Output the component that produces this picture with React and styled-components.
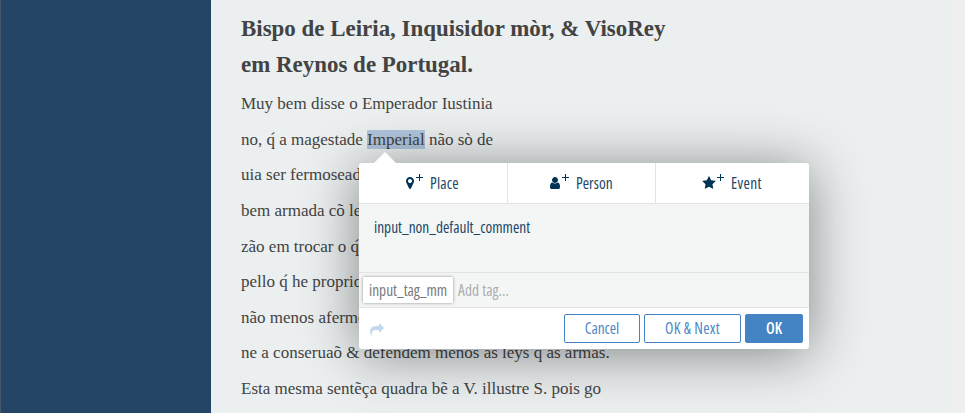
import React from 'react';
import styled, { createGlobalStyle } from 'styled-components';

const GlobalStyle = createGlobalStyle`
  *, *::before, *::after { box-sizing: border-box; }
  body { margin: 0; background: #efefef; overflow: hidden; }
`;

const Page = styled.div`
  display: flex;
  width: 965px;
  height: 413px;
  overflow: hidden;
  background: #efefef;
`;

const Sidebar = styled.aside`
  flex: none;
  width: 211px;
  background: #254567;
  border-left: 1px solid #46586a;
`;

const Document = styled.main`
  position: relative;
  flex: none;
  width: 742px;
  padding: 11px 0 0 30px;
  background: #ebeff0;
  color: #434343;
  font: 17px/35.65px "Liberation Serif", serif;
`;

const Heading = styled.h2`
  margin: 0 0 3.6px;
  font-size: 22.95px;
  line-height: 35.7px;
  font-weight: bold;
`;

const Line = styled.div`
  height: 35.65px;
  white-space: pre;
`;

const Selection = styled.span`
  background: #afc6de;
`;

const Popup = styled.section`
  position: absolute;
  left: 148px;
  top: 163px;
  width: 450px;
  height: 186px;
  display: flex;
  flex-direction: column;
  border-radius: 3px;
  background: #fff;
  box-shadow: 0 5px 55px rgba(0, 0, 0, 0.45);
  color: #003456;
  font: 15.4px/20px "Open Sans", sans-serif;
  font-stretch: 75%;

  &::before {
    content: '';
    position: absolute;
    left: 15px;
    top: -11px;
    border: solid transparent;
    border-width: 0 11px 11px;
    border-bottom-color: #fff;
  }
`;

const Categories = styled.div`
  display: grid;
  grid-template-columns: 149px 148px 153px;
  height: 41px;
  border-bottom: 1px solid #e2e4e4;
`;

const Category = styled.button`
  display: flex;
  align-items: center;
  min-width: 0;
  padding: 0 0 0 ${p => p.$inset}px;
  border: 0;
  border-right: 1px solid #e2e4e4;
  background: transparent;
  color: inherit;
  font: inherit;
  font-stretch: 75%;
  letter-spacing: ${p => p.$spacing || 0}px;

  &:last-child { border-right: 0; }
`;

const Label = styled.span`
  padding-top: 1px;
  color: #1a4866;
`;

const Icon = styled.svg`
  flex: none;
  display: block;
  width: ${p => p.$w}px;
  height: ${p => p.$h || 14}px;
  fill: currentColor;
`;

const Plus = styled(Icon)`
  margin: 0 ${p => p.$gap}px 11px ${p => p.$before}px;
`;

const Comment = styled.div`
  height: 69px;
  padding: 14px 15px;
  background: #f4f6f6;
  border-bottom: 1px solid #e2e4e4;
  color: #1a4866;
`;

const Tags = styled.div`
  display: flex;
  align-items: center;
  height: 35px;
  padding-left: 4px;
  background: #f4f6f6;
  border-bottom: 1px solid #e2e4e4;
`;

const Tag = styled.span`
  width: 90px;
  height: 26px;
  padding-left: 6px;
  line-height: 27px;
  background: #fff;
  box-shadow: 0 0 3px rgba(0, 0, 0, 0.4);
  color: #7a7a7a;
`;

const Placeholder = styled.span`
  margin-left: 5px;
  padding-top: 1px;
  letter-spacing: 0.1px;
  color: #adadad;
`;

const Footer = styled.footer`
  display: flex;
  align-items: center;
  gap: 4px;
  flex: 1;
  padding: 0 6px 0 11px;
  color: #c5d9ee;
`;

const Share = styled(Icon)`
  margin-top: 2px;
`;

const Spacer = styled.div`
  flex: 1;
`;

const Button = styled.button`
  width: ${p => p.$w}px;
  height: 29px;
  padding: 0;
  border: 1px solid #4483c4;
  border-radius: 2px;
  background: ${p => (p.$primary ? '#4483c4' : '#fff')};
  color: ${p => (p.$primary ? '#fff' : '#4c89c7')};
  font: inherit;
  font-stretch: 75%;
  font-weight: ${p => (p.$primary ? 600 : 400)};
  letter-spacing: ${p => p.$spacing || 0}px;
  line-height: 26px;
`;

const MARKER = 'M768 640q0-106-75-181t-181-75-181 75-75 181 75 181 181 75 181-75 75-181zm256 0q0 109-33 179l-364 774q-16 33-47.5 52t-67.5 19-67.5-19-46.5-52l-365-774q-33-70-33-179 0-212 150-362t362-150 362 150 150 362z';
const USER = 'M1536 1399q0 109-62.5 187t-150.5 78h-854q-88 0-150.5-78t-62.5-187q0-85 8.5-160.5t31.5-152 58.5-131 94-89 134.5-34.5q131 128 313 128t313-128q76 0 134.5 34.5t94 89 58.5 131 31.5 152 8.5 160.5zm-256-887q0 159-112.5 271.5t-271.5 112.5-271.5-112.5-112.5-271.5 112.5-271.5 271.5-112.5 271.5 112.5 112.5 271.5z';
const STAR = 'M1728 647q0 22-26 48l-363 354 86 500q1 7 1 20 0 21-10.5 35.5t-30.5 14.5q-19 0-40-12l-449-236-449 236q-22 12-40 12-21 0-31.5-14.5t-10.5-35.5q0-6 2-20l86-500-364-354q-25-27-25-48 0-37 56-46l502-73 225-455q19-41 49-41t49 41l225 455 502 73q56 9 56 46z';
const SHARE = 'M1792 640q0 26-19 45l-512 512q-19 19-45 19t-45-19-19-45v-256h-224q-98 0-175.5 6t-154 21.5-133 42.5-105.5 69.5-80 101-48.5 138.5-17.5 181q0 55 5 123 0 6 2.5 23.5t2.5 26.5q0 15-8.5 25t-23.5 10q-16 0-28-17-7-9-13-22t-13.5-30-10.5-24q-127-285-127-451 0-199 53-333 162-403 875-403h224v-256q0-26 19-45t45-19 45 19l512 512q19 19 19 45z';

const categories = [
  { label: 'Place', path: MARKER, box: '0 0 1024 1792', width: 8, inset: 47, before: 2, gap: 7, spacing: 0.2 },
  { label: 'Person', path: USER, box: '256 0 1280 1792', width: 10, inset: 42, before: 2, gap: 7, spacing: 0 },
  { label: 'Event', path: STAR, box: '0 0 1792 1792', width: 14, inset: 46, before: 1, gap: 7, spacing: 0.4 },
];

const verses = [
  'uia ser fermosead',
  'bem armada cõ le',
  'zão em trocar o q\u0301',
  'pello q\u0301 he proprio',
  'não menos afermo',
  'ne a conseruaõ & defendem menos as leys q\u0301 as armas.',
  'Esta mesma sentẽça quadra bẽ a V. illustre S. pois go',
];

export default function App() {
  return (
    <>
      <GlobalStyle />
      <Page>
        <Sidebar />
        <Document>
          <Heading>
            Bispo de Leiria, Inquisidor mòr, &amp; VisoRey
            <br />
            em Reynos de Portugal.
          </Heading>
          <Line>Muy bem disse o Emperador Iustinia</Line>
          <Line>
            {'no, q\u0301 a magestade '}
            <Selection>Imperial</Selection>
            {' não sò de'}
          </Line>
          {verses.map(text => (
            <Line key={text}>{text}</Line>
          ))}
          <Popup>
            <Categories>
              {categories.map(c => (
                <Category key={c.label} $inset={c.inset} $spacing={c.spacing}>
                  <Icon viewBox={c.box} $w={c.width}><path d={c.path} /></Icon>
                  <Plus viewBox="0 0 7 7" $w={7} $h={7} $before={c.before} $gap={c.gap}>
                    <path d="M3 0h1v3h3v1H4v3H3V4H0V3h3z" />
                  </Plus>
                  <Label>{c.label}</Label>
                </Category>
              ))}
            </Categories>
            <Comment>input_non_default_comment</Comment>
            <Tags>
              <Tag>input_tag_mm</Tag>
              <Placeholder>Add tag...</Placeholder>
            </Tags>
            <Footer>
              <Share viewBox="0 0 1792 1792" $w={14}><path d={SHARE} /></Share>
              <Spacer />
              <Button $w={76} $spacing={-0.1}>Cancel</Button>
              <Button $w={97} $spacing={0.25}>OK &amp; Next</Button>
              <Button $w={58} $primary>OK</Button>
            </Footer>
          </Popup>
        </Document>
      </Page>
    </>
  );
}
